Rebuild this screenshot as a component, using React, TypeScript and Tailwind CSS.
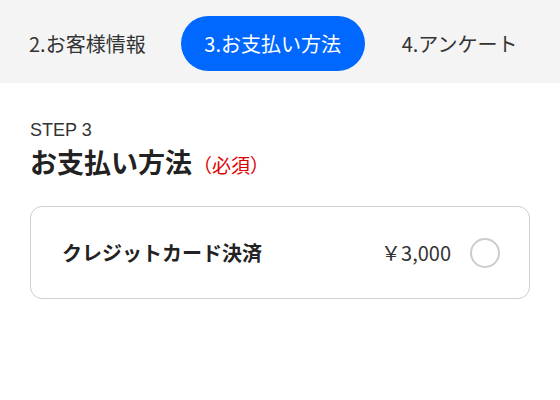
import React from "react";

export default function App() {
  const jp = { fontFamily: '"Noto Sans CJK JP", "Noto Sans", sans-serif' };
  return (
    <div className="w-[560px] h-[400px] bg-white overflow-hidden" style={jp}>
      <div className="h-[83px] bg-[#f4f4f4] flex items-start pt-[16px] pl-[5px]">
        <div className="h-[55px] px-[24px] flex items-center text-[20px] font-normal text-[#333] whitespace-nowrap">
          2.お客様情報
        </div>
        <div className="ml-[11px] h-[55px] w-[184px] rounded-full bg-[#0068ff] flex items-center justify-center text-[20px] font-normal text-white whitespace-nowrap">
          3.お支払い方法
        </div>
        <div className="ml-[13px] h-[55px] px-[24px] flex items-center text-[20px] font-normal text-[#333] whitespace-nowrap">
          4.アンケート
        </div>
      </div>
      <div className="px-[30px] pt-[37px]">
        <div
          className="text-[18px] leading-[20px] text-[#333]"
          style={{ fontFamily: '"Liberation Sans", "Noto Sans CJK JP", sans-serif' }}
        >
          STEP 3
        </div>
        <div className="mt-[4px] flex items-baseline">
          <span className="text-[27px] leading-[36px] font-bold text-[#222]">お支払い方法</span>
          <span className="ml-[1px] text-[19px] text-[#e00000]">（必須）</span>
        </div>
        <div className="mt-[26px] h-[93px] rounded-[12px] border border-[#cfcfcf] flex items-center pl-[31px] pr-[29px]">
          <span className="text-[20px] font-bold text-[#222]">クレジットカード決済</span>
          <span className="ml-auto text-[20px] text-[#333]">￥3,000</span>
          <span className="ml-[19px] w-[30px] h-[30px] rounded-full border-2 border-[#cccccc] bg-white"></span>
        </div>
      </div>
    </div>
  );
}
